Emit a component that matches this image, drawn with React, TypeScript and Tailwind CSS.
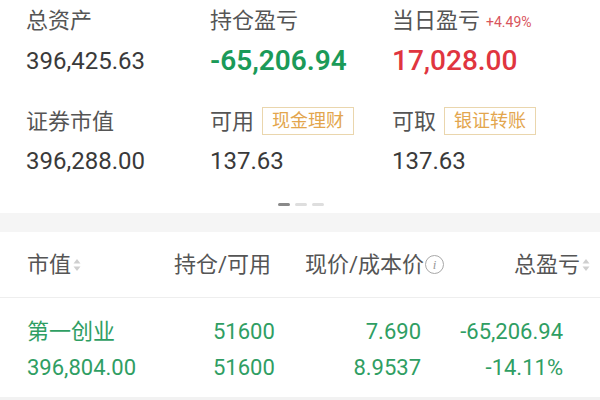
import React from "react";

const font = { fontFamily: 'Roboto, "Noto Sans CJK SC", sans-serif' };

function SortArrows() {
  return (
    <svg width="8" height="14" viewBox="0 0 8 14" className="ml-[2px] shrink-0">
      <path d="M4 1 L7.5 5.5 L0.5 5.5 Z" fill="#cfcfcf" />
      <path d="M4 13 L7.5 8.5 L0.5 8.5 Z" fill="#cfcfcf" />
    </svg>
  );
}

function Badge({ text }: { text: string }) {
  return (
    <span className="ml-[8px] inline-flex h-[28px] items-center border border-[#ead6ad] px-[9px] text-[18px] leading-none text-[#e3a64e]">
      {text}
    </span>
  );
}

export default function App() {
  return (
    <div className="w-[600px] h-[400px] overflow-hidden bg-white" style={font}>
      {/* summary */}
      <div className="grid grid-cols-[184px_182px_1fr] pl-[26px]">
        <div className="h-[40px] flex items-center text-[22px] text-[#555]">总资产</div>
        <div className="h-[40px] flex items-center text-[22px] text-[#555]">持仓盈亏</div>
        <div className="h-[40px] flex items-center text-[22px] text-[#555]">
          当日盈亏
          <span className="ml-[6px] mt-[4px] text-[14px] text-[#d9555c]">+4.49%</span>
        </div>

        <div className="h-[42px] flex items-center text-[24px] text-[#3a3a3a]">396,425.63</div>
        <div className="h-[42px] flex items-center text-[28px] font-semibold text-[#1b9a58]">-65,206.94</div>
        <div className="h-[42px] flex items-center text-[28px] font-medium text-[#e0353f]">17,028.00</div>

        <div className="mt-[20px] h-[38px] flex items-center text-[22px] text-[#555]">证券市值</div>
        <div className="mt-[20px] h-[38px] flex items-center text-[22px] text-[#555]">
          可用
          <Badge text="现金理财" />
        </div>
        <div className="mt-[20px] h-[38px] flex items-center text-[22px] text-[#555]">
          可取
          <Badge text="银证转账" />
        </div>

        <div className="h-[42px] flex items-center text-[24px] text-[#3a3a3a]">396,288.00</div>
        <div className="h-[42px] flex items-center text-[24px] text-[#3a3a3a]">137.63</div>
        <div className="h-[42px] flex items-center text-[24px] text-[#3a3a3a]">137.63</div>
      </div>

      {/* page dots */}
      <div className="mt-[21px] flex h-[3px] justify-center gap-[5px] pl-[2px]">
        <span className="w-[12px] h-[3px] rounded-full bg-[#8a8a8a]" />
        <span className="w-[12px] h-[3px] rounded-full bg-[#dedede]" />
        <span className="w-[12px] h-[3px] rounded-full bg-[#dedede]" />
      </div>

      <div className="mt-[7px] h-[19px] bg-[#f5f5f5]" />

      {/* table header */}
      <div className="flex h-[66px] items-center whitespace-nowrap border-b border-[#eeeeee] pl-[27px] text-[22px] text-[#555]">
        <div className="w-[147px] shrink-0 flex items-center">
          市值
          <SortArrows />
        </div>
        <div className="w-[131px] shrink-0">持仓/可用</div>
        <div className="w-[138px] shrink-0 flex items-center">
          现价/成本价
          <span className="ml-[1px] inline-flex h-[19px] w-[19px] shrink-0 items-center justify-center rounded-full border border-[#a8a8a8] text-[13px] italic leading-none text-[#999]" style={{ fontFamily: '"Liberation Serif", serif' }}>
            i
          </span>
        </div>
        <div className="flex-1 flex items-center justify-end pr-[10px]">
          总盈亏
          <SortArrows />
        </div>
      </div>

      {/* holdings */}
      <div className="pt-[17px] pl-[27px] text-[22px] text-[#2f9e63]">
        <div className="flex h-[32px] items-center">
          <div className="w-[186px]">第一创业</div>
          <div className="w-[100px]">51600</div>
          <div className="w-[108px] text-right">7.690</div>
          <div className="w-[142px] text-right">-65,206.94</div>
        </div>
        <div className="mt-[4px] flex h-[32px] items-center">
          <div className="w-[186px]">396,804.00</div>
          <div className="w-[100px]">51600</div>
          <div className="w-[108px] text-right">8.9537</div>
          <div className="w-[142px] text-right">-14.11%</div>
        </div>
      </div>

      <div className="mt-[14px] h-[10px] bg-[#f2f2f2]" />
    </div>
  );
}
